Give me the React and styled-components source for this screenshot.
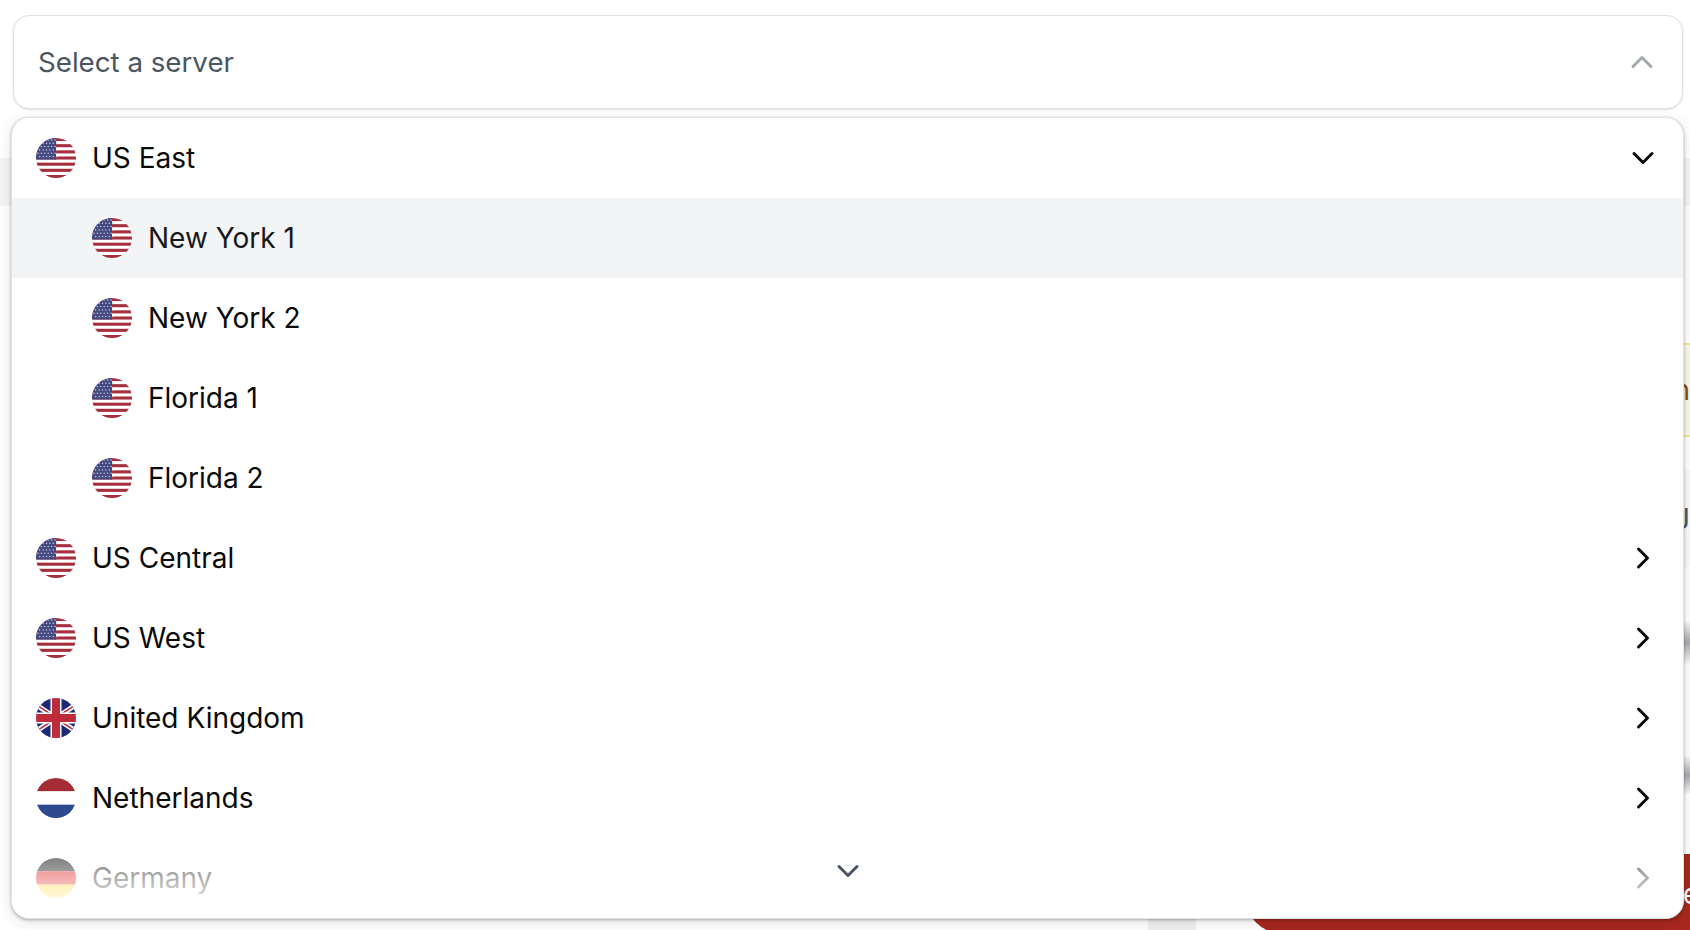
import React from "react";
import styled, { createGlobalStyle } from "styled-components";
import { ChevronDown, ChevronRight, ChevronUp } from "lucide-react";

const GlobalStyle = createGlobalStyle`
  html, body {
    margin: 0;
    background: #fff;
    font-family: "Inter", "Liberation Sans", sans-serif;
  }
`;

const SERVERS = [
  { name: "US East", flag: "us", open: true },
  { name: "New York 1", flag: "us", nested: true, active: true },
  { name: "New York 2", flag: "us", nested: true },
  { name: "Florida 1", flag: "us", nested: true },
  { name: "Florida 2", flag: "us", nested: true },
  { name: "US Central", flag: "us" },
  { name: "US West", flag: "us" },
  { name: "United Kingdom", flag: "uk" },
  { name: "Netherlands", flag: "nl" },
  { name: "Germany", flag: "de" },
];

function UsFlag() {
  const stripes = Array.from({ length: 7 }, (_, i) => i * 6.16);
  const stars = [];
  for (let row = 0; row < 6; row++) {
    for (let col = 0; col < 6; col++) {
      stars.push([2 + col * 3.4 + (row % 2) * 1.7, 2 + row * 3.3]);
    }
  }
  return (
    <FlagSvg viewBox="0 0 40 40">
      <rect width="40" height="40" fill="#fff" />
      {stripes.map((y) => (
        <rect key={y} y={y} width="40" height="3.08" fill="#a52f3f" />
      ))}
      <rect width="20" height="21.5" fill="#444a80" />
      {stars.map(([x, y]) => (
        <circle key={`${x}-${y}`} cx={x} cy={y} r="0.75" fill="#c9cbe0" />
      ))}
    </FlagSvg>
  );
}

function UkFlag() {
  return (
    <FlagSvg viewBox="0 0 40 40">
      <rect width="40" height="40" fill="#1b2a72" />
      <path d="M-10 0 L50 40 M50 0 L-10 40" stroke="#fff" strokeWidth="5" />
      <path d="M-10 0 L16 17 M24 23 L50 40 M50 0 L24 17 M16 23 L-10 40" stroke="#c22f3c" strokeWidth="1.5" />
      <rect x="14.5" width="11" height="40" fill="#fff" />
      <rect y="14.5" width="40" height="11" fill="#fff" />
      <rect x="16" width="8" height="40" fill="#bf2c39" />
      <rect y="16" width="40" height="8" fill="#bf2c39" />
    </FlagSvg>
  );
}

function StripedFlag({ colors }) {
  return (
    <FlagSvg viewBox="0 0 40 40">
      {colors.map((color, i) => (
        <rect key={color} y={(i * 40) / 3} width="40" height="13.4" fill={color} />
      ))}
    </FlagSvg>
  );
}

function Flag({ code }) {
  if (code === "us") return <UsFlag />;
  if (code === "uk") return <UkFlag />;
  if (code === "nl") return <StripedFlag colors={["#a52c34", "#ffffff", "#2e4a8e"]} />;
  return <StripedFlag colors={["#000000", "#dd0000", "#ffce00"]} />;
}

export default function App() {
  return (
    <>
      <GlobalStyle />
      <Page>
        <TriggerRow>
          <Trigger>
            <Placeholder>Select a server</Placeholder>
            <ChevronUp size={36} strokeWidth={2} color="#a3a8b3" />
          </Trigger>
        </TriggerRow>

        <Band />
        <Notice>n</Notice>
        <Section>J</Section>
        <Blur $top={53} $height={45} />
        <Blur $top={90} $height={40} />
        <BottomRow>
          <GreyBlock />
          <RedButton>e</RedButton>
        </BottomRow>

        <Panel>
          {SERVERS.map((server) => (
            <Row key={server.name} $nested={server.nested} $active={server.active}>
              <Flag code={server.flag} />
              <Label>{server.name}</Label>
              {!server.nested &&
                (server.open ? (
                  <ChevronDown size={36} strokeWidth={2} color="#0a0a0a" />
                ) : (
                  <ChevronRight size={36} strokeWidth={2} color="#0a0a0a" />
                ))}
            </Row>
          ))}
          <ScrollDown>
            <ChevronDown size={36} strokeWidth={2} color="#4b5563" />
          </ScrollDown>
        </Panel>
      </Page>
    </>
  );
}

const Page = styled.div`
  position: relative;
  width: 1690px;
  height: 930px;
  overflow: hidden;
  background: #fff;
`;

const TriggerRow = styled.div`
  padding: 15px 7px 0 13px;
`;

const Trigger = styled.div`
  display: flex;
  align-items: center;
  justify-content: space-between;
  box-sizing: border-box;
  height: 94px;
  padding: 0 22px 0 24px;
  background: #fff;
  border: 1px solid #dfe1e5;
  border-radius: 16px;
  box-shadow: 0 1px 2px rgba(0, 0, 0, 0.12);
`;

const Placeholder = styled.span`
  font-size: 27.7px;
  color: #4b5563;
`;

const Band = styled.div`
  height: 48px;
  margin-top: 49px;
  background: #f5f5f6;
`;

const Notice = styled.div`
  display: flex;
  align-items: center;
  justify-content: flex-end;
  box-sizing: border-box;
  height: 94px;
  margin: 137px 0 0 1600px;
  background: #fbf8e6;
  border-top: 2px solid #f7e68f;
  border-bottom: 2px solid #f7e68f;
  font-size: 28px;
  color: #854d0e;
`;

const Section = styled.div`
  display: flex;
  align-items: center;
  justify-content: flex-end;
  box-sizing: border-box;
  height: 97px;
  margin: 33px 0 0 1600px;
  background: #f9fafb;
  font-size: 28px;
  color: #4b5563;
`;

const Blur = styled.div`
  height: ${(p) => p.$height}px;
  margin: ${(p) => p.$top}px 0 0 1600px;
  background: linear-gradient(to bottom, transparent, #a9a9ad 50%, transparent);
`;

const BottomRow = styled.div`
  display: flex;
  align-items: flex-start;
  margin-top: 59px;
  padding-left: 1148px;
`;

const GreyBlock = styled.div`
  flex: none;
  width: 48px;
  height: 80px;
  background: #f0f0f0;
`;

const RedButton = styled.div`
  flex: none;
  display: flex;
  align-items: center;
  justify-content: flex-end;
  box-sizing: border-box;
  width: 458px;
  height: 80px;
  margin-left: 48px;
  padding-right: 3px;
  background: #a8281f;
  border-radius: 40px 0 0 40px;
  font-size: 28px;
  color: #fff;
`;

const Panel = styled.div`
  position: absolute;
  top: 117px;
  left: 11px;
  box-sizing: border-box;
  width: 1673px;
  height: 802px;
  overflow: hidden;
  background: #fff;
  border: 1px solid #e0e2e6;
  border-radius: 18px;
  box-shadow: 0 1px 3px rgba(0, 0, 0, 0.3), 0 4px 16px rgba(0, 0, 0, 0.1);
`;

const Row = styled.div`
  display: flex;
  align-items: center;
  gap: 16px;
  height: 80px;
  padding: 0 22px 0 ${(p) => (p.$nested ? 80 : 24)}px;
  background: ${(p) => (p.$active ? "#f3f4f6" : "transparent")};
  color: ${(p) => (p.$active ? "#18181b" : "#0a0a0a")};
`;

const FlagSvg = styled.svg`
  flex: none;
  width: 40px;
  height: 40px;
  border-radius: 50%;
`;

const Label = styled.span`
  flex: 1;
  font-size: 28px;
`;

const ScrollDown = styled.div`
  position: absolute;
  left: 0;
  right: 0;
  bottom: 0;
  display: flex;
  align-items: flex-end;
  justify-content: center;
  box-sizing: border-box;
  height: 100px;
  padding-bottom: 29px;
  background: linear-gradient(
    to bottom,
    rgba(255, 255, 255, 0),
    rgba(255, 255, 255, 0.5) 40%,
    rgba(255, 255, 255, 0.85) 80%,
    #fff
  );
`;
